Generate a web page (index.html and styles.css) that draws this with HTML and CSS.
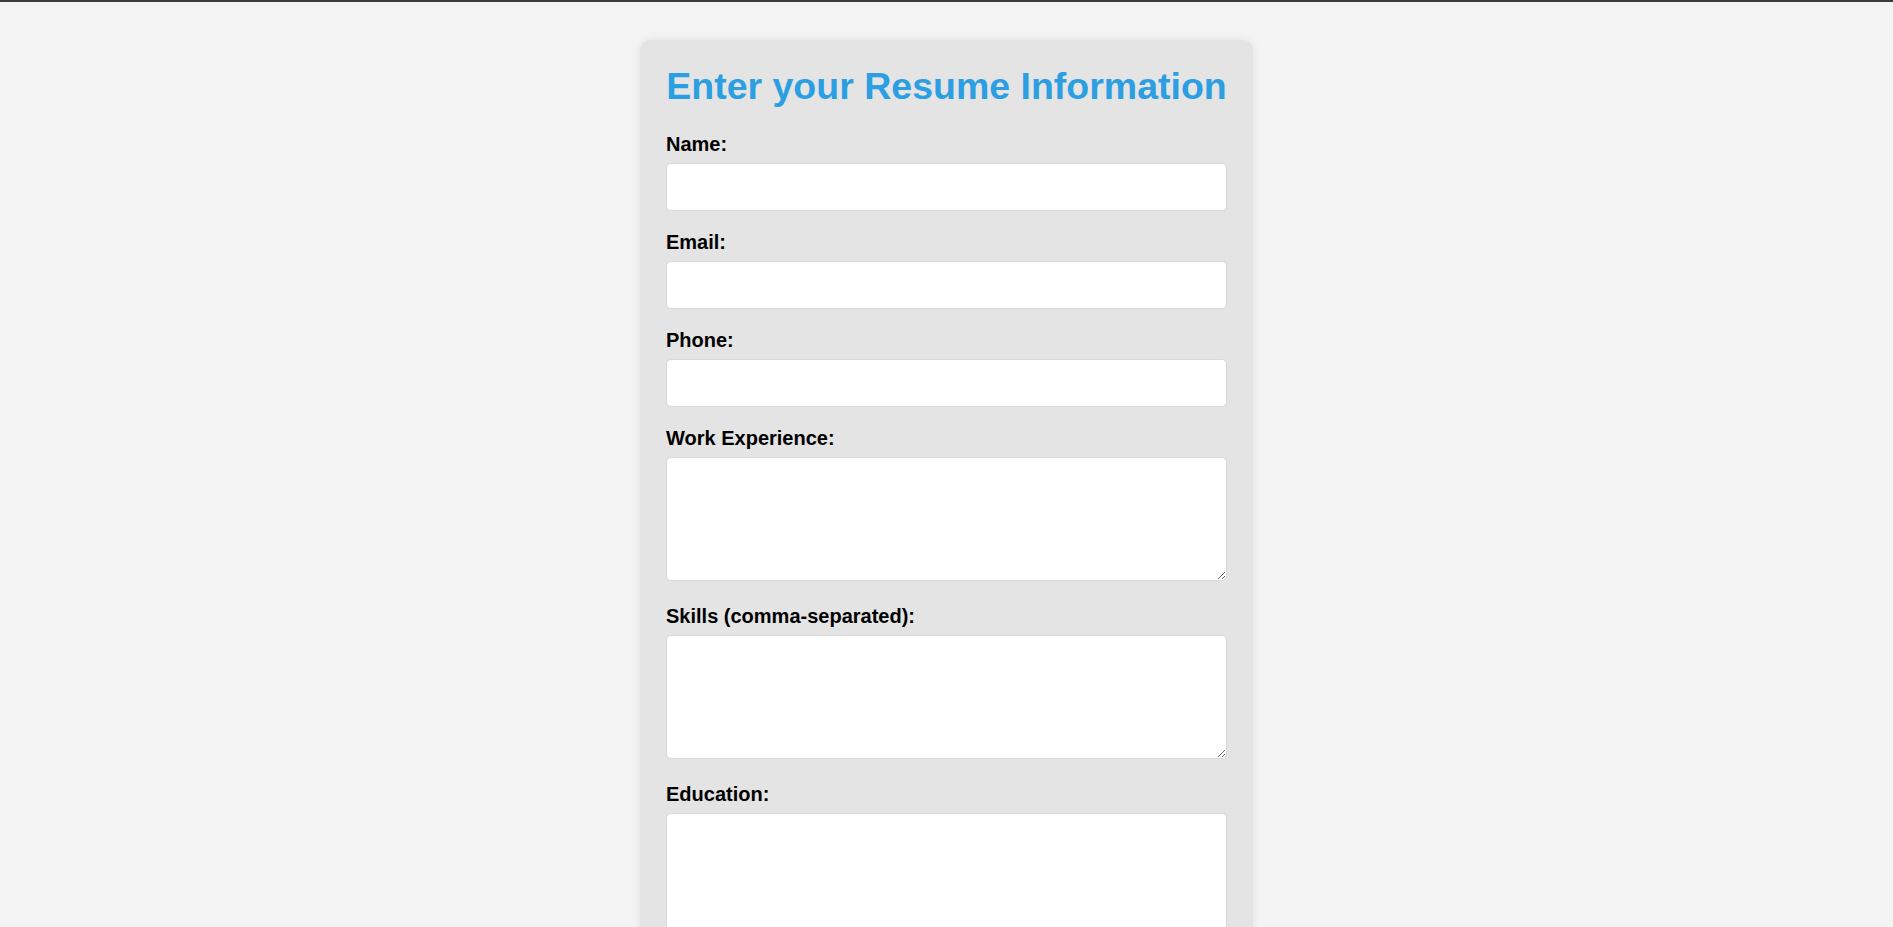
FILE: index.html
```html
<!DOCTYPE html>
<html lang="en">
<head>
<meta charset="utf-8">
<title>Resume Builder</title>
<link rel="stylesheet" href="styles.css">
</head>
<body>
<div class="topbar"></div>
<div class="card">
  <h1 class="title">Enter your Resume Information</h1>
  <form class="form">
    <label class="label" for="name">Name:</label>
    <input class="field" type="text" id="name">
    <label class="label" for="email">Email:</label>
    <input class="field" type="email" id="email">
    <label class="label" for="phone">Phone:</label>
    <input class="field" type="tel" id="phone">
    <label class="label" for="work">Work Experience:</label>
    <textarea class="area" id="work"></textarea>
    <label class="label" for="skills">Skills (comma-separated):</label>
    <textarea class="area" id="skills"></textarea>
    <label class="label" for="edu">Education:</label>
    <textarea class="area" id="edu"></textarea>
  </form>
</div>
</body>
</html>
```
FILE: styles.css
```css
html, body {
  margin: 0;
  padding: 0;
}
body {
  background: #f4f4f4;
  font-family: "Liberation Sans", Arial, sans-serif;
  color: #000;
}
.topbar {
  height: 2px;
  background: #3a3a3a;
}
.card {
  width: 613px;
  box-sizing: border-box;
  margin: 38px auto 40px;
  padding: 25px 26px;
  background: #e4e4e4;
  border-radius: 10px;
  box-shadow: 0 0 10px rgba(0, 0, 0, 0.08);
}
.title {
  margin: 0 0 25px;
  font-size: 37.5px;
  line-height: 43px;
  font-weight: bold;
  color: #2c9fe2;
  text-align: center;
  white-space: nowrap;
}
.form {
  margin: 0;
}
.label {
  display: block;
  font-size: 20px;
  line-height: 23px;
  font-weight: bold;
  margin-bottom: 7px;
}
.field,
.area {
  display: block;
  width: 100%;
  box-sizing: border-box;
  background: #fff;
  border: 1px solid #d8d8d8;
  border-radius: 5px;
  font-family: "Liberation Sans", Arial, sans-serif;
  font-size: 20px;
  padding: 12px;
  outline: none;
}
.field {
  height: 48px;
  margin-bottom: 20px;
}
.area {
  height: 124px;
  margin-bottom: 24px;
  resize: vertical;
}
```
